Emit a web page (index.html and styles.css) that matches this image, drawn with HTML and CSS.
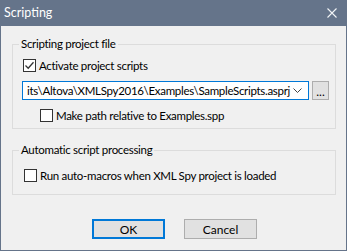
FILE: index.html
```html
<!DOCTYPE html>
<html lang="en">
<head>
  <meta charset="UTF-8">
  <title>Scripting</title>
  <link rel="stylesheet" href="styles.css">
</head>
<body>

<div class="dialog">
  <!-- Title bar -->
  <div class="titlebar">
    <span class="title">Scripting</span>
    <svg class="close" width="10" height="10" viewBox="0 0 10 10">
      <path d="M0.5 0.5 L9.5 9.5 M9.5 0.5 L0.5 9.5" stroke="#f2f4f6" stroke-width="1.1" fill="none"/>
    </svg>
  </div>

  <div class="content">
    <fieldset class="group group-project">
      <legend>Scripting project file</legend>

      <label class="check-row row-activate">
        <span class="box">
          <svg width="11" height="11" viewBox="0 0 11 11">
            <path d="M1.5 5.5 L4.2 8.2 L9.5 2.2" stroke="#333" stroke-width="1.3" fill="none"/>
          </svg>
        </span>
        Activate project scripts
      </label>

      <div class="path-row">
        <div class="combo">
          <div class="combo-text">its\Altova\XMLSpy2016\Examples\SampleScripts.asprj</div>
          <svg class="chevron" width="9" height="5" viewBox="0 0 9 5">
            <path d="M0.5 0.5 L4.5 4.5 L8.5 0.5" stroke="#444" stroke-width="1" fill="none"/>
          </svg>
        </div>
        <button class="browse">...</button>
      </div>

      <label class="check-row row-relative">
        <span class="box"></span>
        Make path relative to Examples.spp
      </label>
    </fieldset>

    <fieldset class="group group-auto">
      <legend>Automatic script processing</legend>
      <label class="check-row row-macros">
        <span class="box"></span>
        Run auto-macros when XML Spy project is loaded
      </label>
    </fieldset>

    <div class="buttons">
      <button class="btn btn-default">OK</button>
      <button class="btn">Cancel</button>
    </div>
  </div>
</div>

</body>
</html>
```

FILE: styles.css
```css
body {
  margin: 0;
  font-family: Lato, "Liberation Sans", Arial, sans-serif;
  font-size: 11.5px;
  letter-spacing: -0.3px;
  color: #000;
  background: #f0f0f0;
}

.dialog {
  width: 347px;
  height: 251px;
  box-sizing: border-box;
  border: 1px solid #65748a;
  border-top: none;
  background: #f0f0f0;
}

.titlebar {
  height: 26px;
  margin: 0 -1px;
  background: #65748a;
  display: flex;
  align-items: center;
  justify-content: space-between;
  padding: 0 10px 0 4px;
}

.title {
  color: #fff;
  font-size: 12.5px;
  letter-spacing: 0;
  margin-top: -1px;
}

.close {
  margin-top: -1px;
}

.content {
  padding: 0 10px 0 11px;
}

.group {
  margin: 0;
  padding: 0;
  border: 1px solid #dcdcdc;
  width: 324px;
  box-sizing: border-box;
}

.group legend {
  margin-left: 6px;
  padding: 0 2px;
  line-height: 14px;
  height: 14px;
}

.group-project {
  margin-top: 11px;
  padding-bottom: 5px;
}

.group-auto {
  margin-top: 14px;
  padding-bottom: 11px;
}

.check-row {
  display: flex;
  align-items: center;
  height: 16px;
  gap: 3px;
}

.box {
  width: 13px;
  height: 13px;
  box-sizing: border-box;
  border: 1px solid #333;
  background: #fff;
  display: flex;
  align-items: center;
  justify-content: center;
}

.row-activate {
  margin: 6px 0 0 10px;
}

.row-relative {
  margin: 7px 0 0 27px;
}

.row-macros {
  margin: 10px 0 0 11px;
}

.path-row {
  display: flex;
  gap: 3px;
  margin: 8px 0 0 9px;
}

.combo {
  width: 287px;
  height: 19px;
  box-sizing: border-box;
  border: 1px solid #0078d7;
  background: #fff;
  display: flex;
  align-items: center;
}

.combo-text {
  flex: 1;
  white-space: nowrap;
  padding-left: 4px;
}

.chevron {
  margin-right: 6px;
}

.browse {
  width: 17px;
  height: 19px;
  padding: 0;
  border: 1px solid #adadad;
  background: #e1e1e1;
  font-family: inherit;
  font-size: 12px;
  line-height: 20px;
}

.buttons {
  display: flex;
  justify-content: center;
  gap: 19px;
  margin-top: 24px;
  padding-left: 1px;
}

.btn {
  width: 73px;
  height: 20px;
  box-sizing: border-box;
  border: 1px solid #adadad;
  background: #e1e1e1;
  font-family: inherit;
  font-size: 12px;
  letter-spacing: 0;
  padding: 0;
  color: #000;
}

.btn-default {
  border: 2px solid #0078d7;
}
```
